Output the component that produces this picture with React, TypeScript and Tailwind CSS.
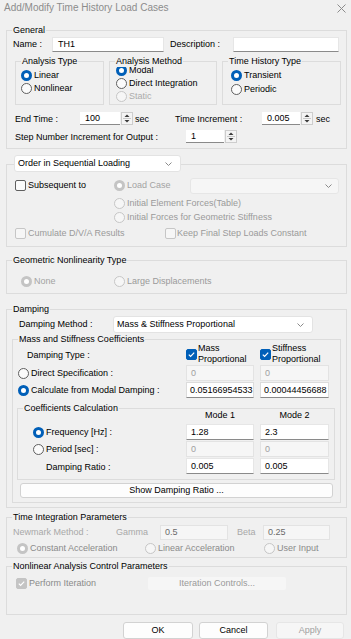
import React from "react";

type RS = "on" | "off" | "don" | "doff";

const Radio = ({ s }: { s: RS }) => {
  const cls =
    s === "on"
      ? "border-[3px] border-[#005fb8] bg-white"
      : s === "off"
      ? "border border-[#5f5f5f] bg-[#fbfbfb]"
      : s === "don"
      ? "border-[3px] border-[#c4c4c4] bg-white"
      : "border border-[#c6c6c6] bg-[#f6f6f6]";
  return <span className={`inline-block w-[11px] h-[11px] rounded-full shrink-0 ${cls}`} />;
};

const R = ({ s, t, c = "text-black" }: { s: RS; t: string; c?: string }) => (
  <div className="flex items-center gap-[2px] whitespace-nowrap">
    <Radio s={s} />
    <span className={c}>{t}</span>
  </div>
);

type CS = "on" | "off" | "don" | "doff";
const Check = ({ s }: { s: CS }) => {
  const cls =
    s === "on"
      ? "bg-[#005fb8] border border-[#005fb8]"
      : s === "off"
      ? "bg-[#fbfbfb] border border-[#5f5f5f]"
      : s === "don"
      ? "bg-[#c4c4c4] border border-[#c4c4c4]"
      : "bg-[#f6f6f6] border border-[#c6c6c6]";
  return (
    <span className={`inline-flex items-center justify-center w-[11px] h-[11px] rounded-[2px] shrink-0 ${cls}`}>
      {(s === "on" || s === "don") && (
        <svg width="9" height="9" viewBox="0 0 9 9">
          <polyline points="1.8,4.6 3.6,6.4 7.2,2.6" stroke="white" strokeWidth="1.2" fill="none" />
        </svg>
      )}
    </span>
  );
};

const Chevron = () => (
  <svg width="7" height="4" viewBox="0 0 7 4" className="shrink-0">
    <path d="M0.5 0.5 L3.5 3.5 L6.5 0.5" stroke="#8a8a8a" fill="none" />
  </svg>
);

const Spinner = () => (
  <div className="w-[12px] h-[13px] border border-[#cdcdcd] bg-[#f4f4f4] shrink-0 flex flex-col items-center">
    <svg width="10" height="11" viewBox="0 0 10 11">
      <path d="M2.5 4 L5 1.5 L7.5 4 Z" fill="#3a3a3a" />
      <line x1="1" y1="5.5" x2="9" y2="5.5" stroke="#c8c8c8" />
      <path d="M2.5 7 L5 9.5 L7.5 7 Z" fill="#3a3a3a" />
    </svg>
  </div>
);

const Group = ({
  label,
  className,
  children,
}: {
  label: string;
  className: string;
  children?: React.ReactNode;
}) => (
  <div className={`relative border border-[#dcdcdc] ${className}`}>
    <span className="absolute -top-[6px] left-[5px] px-[1px] bg-[#f0f0f0] leading-[11px] whitespace-nowrap text-black">
      {label}
    </span>
    {children}
  </div>
);

export default function App() {
  return (
    <div className="w-[351px] h-[639px] bg-[#f0f0f0] overflow-hidden flex flex-col text-[9px] leading-[11px] text-black font-['Liberation_Sans',Arial,sans-serif]">
      {/* Title bar */}
      <div className="h-[25px] shrink-0 flex justify-between items-start pt-[2px] pl-[4px] pr-[5px]">
        <span className="text-[10px] leading-[12px] text-[#8c8c8c]">Add/Modify Time History Load Cases</span>
        <svg width="9" height="9" viewBox="0 0 9 9" className="mt-[2px]">
          <path d="M0.5 0.5 L8.5 8.5 M8.5 0.5 L0.5 8.5" stroke="#8c8c8c" strokeWidth="1" />
        </svg>
      </div>

      {/* General */}
      <Group label="General" className="mt-[5px] ml-[6px] w-[341px] h-[119px] shrink-0">
        <div className="mt-[6px] h-[15px] flex items-center pl-[6px]">
          <span className="w-[39px]">Name :</span>
          <div className="w-[112px] h-[15px] bg-white border border-[#e6e6e6] border-b-[#8a8a8a] flex items-center pl-[5px]">
            TH1
          </div>
          <span className="ml-[6px] w-[63px]">Description :</span>
          <div className="w-[106px] h-[15px] bg-white border border-[#e6e6e6] border-b-[#8a8a8a]" />
        </div>
        <div className="mt-[9px] flex pl-[8px] gap-[5px]">
          <Group label="Analysis Type" className="w-[89px] h-[44px]">
            <div className="mt-[7px] pl-[5px] flex flex-col">
              <div className="h-[13px] flex items-center">
                <R s="on" t="Linear" />
              </div>
              <div className="h-[13px] flex items-center">
                <R s="off" t="Nonlinear" />
              </div>
            </div>
          </Group>
          <Group label="Analysis Method" className="w-[108px] h-[44px]">
            <div className="mt-[2px] pl-[6px] flex flex-col">
              <div className="h-[13px] flex items-center">
                <R s="on" t="Modal" />
              </div>
              <div className="h-[13px] flex items-center">
                <R s="off" t="Direct Integration" />
              </div>
              <div className="h-[13px] flex items-center">
                <R s="doff" t="Static" c="text-[#ababab]" />
              </div>
            </div>
          </Group>
          <Group label="Time History Type" className="w-[119px] h-[44px]">
            <div className="mt-[6px] pl-[8px] flex flex-col">
              <div className="h-[14px] flex items-center">
                <R s="on" t="Transient" />
              </div>
              <div className="h-[14px] flex items-center">
                <R s="off" t="Periodic" />
              </div>
            </div>
          </Group>
        </div>
        <div className="mt-[7px] h-[13px] flex items-center pl-[8px]">
          <span className="w-[65px] pt-[2px]">End Time :</span>
          <div className="w-[40px] h-[13px] bg-white border-b border-[#8a8a8a] flex items-center pl-[5px]">100</div>
          <div className="ml-[1px]">
            <Spinner />
          </div>
          <span className="ml-[2px] w-[40px] pt-[2px]">sec</span>
          <span className="w-[87px] pt-[2px]">Time Increment :</span>
          <div className="w-[38px] h-[13px] bg-white border-b border-[#8a8a8a] flex items-center pl-[5px]">0.005</div>
          <div className="ml-[1px]">
            <Spinner />
          </div>
          <span className="ml-[3px] pt-[2px]">sec</span>
        </div>
        <div className="mt-[5px] h-[13px] flex items-center pl-[8px]">
          <span className="w-[171px] pt-[2px]">Step Number Increment for Output :</span>
          <div className="w-[38px] h-[13px] bg-white border-b border-[#8a8a8a] flex items-center pl-[5px]">1</div>
          <div className="ml-[1px]">
            <Spinner />
          </div>
        </div>
      </Group>

      {/* Order */}
      <div className="relative mt-[15px] ml-[6px] w-[341px] h-[83px] shrink-0 border border-[#dcdcdc]">
        <div className="absolute -top-[10px] left-[7px] w-[167px] h-[17px] bg-white border border-[#e3e3e3] rounded-[3px] flex items-center justify-between pl-[3px] pr-[8px]">
          <span>Order in Sequential Loading</span>
          <Chevron />
        </div>
        <div className="mt-[13px] h-[15px] flex items-center">
          <div className="w-[107px] pl-[8px] flex items-center gap-[2px]">
            <Check s="off" />
            <span>Subsequent to</span>
          </div>
          <div className="w-[76px]">
            <R s="don" t="Load Case" c="text-[#a3a3a3]" />
          </div>
          <div className="w-[149px] h-[16px] bg-[#f6f6f6] border border-[#e6e6e6] rounded-[3px] flex items-center justify-end pr-[6px]">
            <Chevron />
          </div>
        </div>
        <div className="mt-[3px] h-[14px] flex items-center pl-[107px]">
          <R s="doff" t="Initial Element Forces(Table)" c="text-[#9a9a9a]" />
        </div>
        <div className="h-[14px] flex items-center pl-[107px]">
          <R s="doff" t="Initial Forces for Geometric Stiffness" c="text-[#9a9a9a]" />
        </div>
        <div className="mt-[2px] h-[14px] flex items-center pl-[8px]">
          <div className="w-[150px] flex items-center gap-[2px]">
            <Check s="doff" />
            <span className="text-[#9a9a9a]">Cumulate D/V/A Results</span>
          </div>
          <div className="flex items-center gap-[1px]">
            <Check s="doff" />
            <span className="text-[#9a9a9a]">Keep Final Step Loads Constant</span>
          </div>
        </div>
      </div>

      {/* Geometric */}
      <Group label="Geometric Nonlinearity Type" className="mt-[13px] ml-[6px] w-[341px] h-[34px] shrink-0">
        <div className="mt-[13px] h-[14px] flex items-center pl-[14px]">
          <div className="w-[93px]">
            <R s="don" t="None" c="text-[#a3a3a3]" />
          </div>
          <R s="doff" t="Large Displacements" c="text-[#9a9a9a]" />
        </div>
      </Group>

      {/* Damping */}
      <Group label="Damping" className="mt-[15px] ml-[6px] w-[341px] h-[199px] shrink-0">
        <div className="mt-[6px] h-[17px] flex items-center pl-[12px]">
          <span className="w-[94px]">Damping Method :</span>
          <div className="w-[200px] h-[17px] bg-white border border-[#e3e3e3] rounded-[3px] flex items-center justify-between pl-[3px] pr-[8px]">
            <span>Mass &amp; Stiffness Proportional</span>
            <Chevron />
          </div>
        </div>
        <Group label="Mass and Stiffness Coefficients" className="mt-[6px] ml-[5px] w-[329px] h-[164px]">
          <div className="mt-[3px] h-[22px] flex items-center pl-[14px]">
            <span className="w-[159px] pt-[2px]">Damping Type :</span>
            <div className="w-[74px] flex items-center gap-[1px]">
              <Check s="on" />
              <span className="leading-[11px]">
                Mass
                <br />
                Proportional
              </span>
            </div>
            <div className="flex items-center gap-[1px]">
              <Check s="on" />
              <span className="leading-[11px]">
                Stiffness
                <br />
                Proportional
              </span>
            </div>
          </div>
          <div className="h-[16px] flex items-center pl-[5px]">
            <div className="w-[168px]">
              <R s="off" t="Direct Specification :" />
            </div>
            <div className="w-[68px] h-[16px] bg-[#f6f6f6] border border-[#e3e3e3] flex items-center pl-[4px] text-[#a0a0a0]">0</div>
            <div className="ml-[6px] w-[69px] h-[16px] bg-[#f6f6f6] border border-[#e3e3e3] flex items-center pl-[4px] text-[#a0a0a0]">0</div>
          </div>
          <div className="mt-[1px] h-[16px] flex items-center pl-[5px]">
            <div className="w-[168px]">
              <R s="on" t="Calculate from Modal Damping :" />
            </div>
            <div className="w-[68px] h-[16px] bg-white border border-[#dcdcdc] border-b-[#8a8a8a] flex items-center pl-[3px]">0.05166954533</div>
            <div className="ml-[6px] w-[69px] h-[16px] bg-white border border-[#dcdcdc] border-b-[#8a8a8a] flex items-center pl-[3px]">0.00044456688</div>
          </div>
          <Group label="Coefficients Calculation" className="mt-[10px] ml-[4px] w-[318px] h-[72px]">
            <div className="mt-[1px] h-[11px] flex items-center pl-[168px]">
              <span className="w-[68px] text-center">Mode 1</span>
              <span className="ml-[6px] w-[69px] text-center">Mode 2</span>
            </div>
            <div className="mt-[3px] h-[16px] flex items-center pl-[15px]">
              <div className="w-[153px]">
                <R s="on" t="Frequency [Hz] :" />
              </div>
              <div className="w-[68px] h-[16px] bg-white border border-[#e6e6e6] border-b-[#8a8a8a] flex items-center pl-[4px]">1.28</div>
              <div className="ml-[6px] w-[69px] h-[16px] bg-white border border-[#e6e6e6] border-b-[#8a8a8a] flex items-center pl-[4px]">2.3</div>
            </div>
            <div className="mt-[1px] h-[16px] flex items-center pl-[15px]">
              <div className="w-[153px]">
                <R s="off" t="Period [sec] :" />
              </div>
              <div className="w-[68px] h-[16px] bg-[#f6f6f6] border border-[#e3e3e3] flex items-center pl-[4px] text-[#a0a0a0]">0</div>
              <div className="ml-[6px] w-[69px] h-[16px] bg-[#f6f6f6] border border-[#e3e3e3] flex items-center pl-[4px] text-[#a0a0a0]">0</div>
            </div>
            <div className="mt-[1px] h-[16px] flex items-center pl-[28px]">
              <span className="w-[140px] pt-[2px]">Damping Ratio :</span>
              <div className="w-[68px] h-[16px] bg-white border border-[#e6e6e6] border-b-[#8a8a8a] flex items-center pl-[4px]">0.005</div>
              <div className="ml-[6px] w-[69px] h-[16px] bg-white border border-[#e6e6e6] border-b-[#8a8a8a] flex items-center pl-[4px]">0.005</div>
            </div>
          </Group>
          <div className="mt-[3px] ml-[7px] w-[313px] h-[15px] bg-[#fdfdfd] border border-[#d2d2d2] rounded-[3px] flex items-center justify-center">
            Show Damping Ratio ...
          </div>
        </Group>
      </Group>

      {/* Time Integration */}
      <Group label="Time Integration Parameters" className="mt-[9px] ml-[6px] w-[341px] h-[41px] shrink-0">
        <div className="mt-[7px] h-[15px] flex items-center pl-[6px]">
          <span className="w-[103px] text-[#a8a8a8]">Newmark Method :</span>
          <span className="w-[44px] text-[#a8a8a8]">Gamma</span>
          <div className="w-[68px] h-[15px] bg-[#f6f6f6] border border-[#e3e3e3] flex items-center pl-[4px] text-[#6a6a6a]">0.5</div>
          <span className="ml-[9px] w-[26px] text-[#a8a8a8]">Beta</span>
          <div className="w-[67px] h-[15px] bg-[#f6f6f6] border border-[#e3e3e3] flex items-center pl-[4px] text-[#6a6a6a]">0.25</div>
        </div>
        <div className="mt-[1px] h-[14px] flex items-center pl-[10px]">
          <div className="w-[128px]">
            <R s="don" t="Constant Acceleration" c="text-[#8a8a8a]" />
          </div>
          <div className="w-[119px]">
            <R s="doff" t="Linear Acceleration" c="text-[#8a8a8a]" />
          </div>
          <R s="doff" t="User Input" c="text-[#8a8a8a]" />
        </div>
      </Group>

      {/* Nonlinear */}
      <Group label="Nonlinear Analysis Control Parameters" className="mt-[8px] ml-[6px] w-[341px] h-[49px] shrink-0">
        <div className="mt-[10px] h-[13px] flex items-center pl-[9px]">
          <div className="w-[132px] flex items-center gap-[2px]">
            <Check s="don" />
            <span className="text-[#8a8a8a]">Perform Iteration</span>
          </div>
          <div className="w-[138px] h-[13px] bg-[#f6f6f6] rounded-[2px] flex items-center justify-center text-[#9a9a9a]">
            Iteration Controls...
          </div>
        </div>
      </Group>

      {/* Buttons */}
      <div className="mt-[7px] h-[17px] flex shrink-0">
        <div className="ml-[123px] w-[70px] h-[17px] bg-[#fdfdfd] border border-[#d2d2d2] rounded-[3px] flex items-center justify-center">
          OK
        </div>
        <div className="ml-[6px] w-[69px] h-[17px] bg-[#fdfdfd] border border-[#d2d2d2] rounded-[3px] flex items-center justify-center">
          Cancel
        </div>
        <div className="ml-[8px] w-[68px] h-[17px] bg-[#f6f6f6] border border-[#e6e6e6] rounded-[3px] flex items-center justify-center text-[#a0a0a0]">
          Apply
        </div>
      </div>
    </div>
  );
}
